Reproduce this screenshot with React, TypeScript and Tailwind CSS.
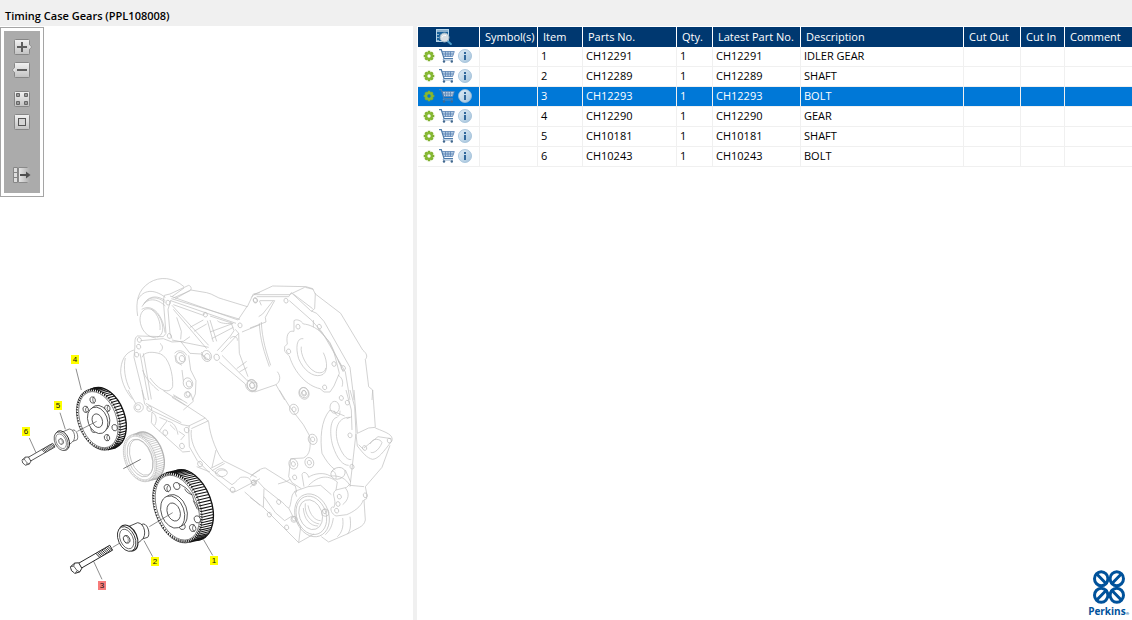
import { useState } from "react";
import type { ReactNode } from "react";

type Part = { item: string; part: string; qty: string; latest: string; description: string };

const PARTS: Part[] = [
  { item: "1", part: "CH12291", qty: "1", latest: "CH12291", description: "IDLER GEAR" },
  { item: "2", part: "CH12289", qty: "1", latest: "CH12289", description: "SHAFT" },
  { item: "3", part: "CH12293", qty: "1", latest: "CH12293", description: "BOLT" },
  { item: "4", part: "CH12290", qty: "1", latest: "CH12290", description: "GEAR" },
  { item: "5", part: "CH10181", qty: "1", latest: "CH10181", description: "SHAFT" },
  { item: "6", part: "CH10243", qty: "1", latest: "CH10243", description: "BOLT" },
];

const CALLOUTS = [
  { id: "4", x: 75, y: 359 },
  { id: "5", x: 58, y: 405 },
  { id: "6", x: 26, y: 431 },
  { id: "1", x: 214, y: 560 },
  { id: "2", x: 155, y: 561 },
  { id: "3", x: 102, y: 585 },
];

/* ---------- toolbar ---------- */

function ToolButton({ label, children }: { label: string; children: ReactNode }) {
  return (
    <button type="button" aria-label={label} title={label} className="block h-[18px] w-5">
      <svg viewBox="0 0 20 18" className="block h-[18px] w-5">
        {children}
      </svg>
    </button>
  );
}

function Tile() {
  return <rect x="2.5" y="1.5" width="15" height="15" rx="1" fill="url(#tile)" stroke="#868686" />;
}

function Toolbar() {
  return (
    <div className="w-11 border border-[#a5a5a5] bg-white p-[3px]">
      <div className="flex flex-col items-center bg-[#ababab] px-2 pt-[7px] pb-[9px]">
        <svg className="h-0 w-0" aria-hidden="true">
          <defs>
            <linearGradient id="tile" x1="0" y1="0" x2="0" y2="1">
              <stop offset="0" stopColor="#f2f2f2" />
              <stop offset="1" stopColor="#c2c2c2" />
            </linearGradient>
            <linearGradient id="fade" x1="0" y1="0" x2="1" y2="0">
              <stop offset="0" stopColor="#ececec" />
              <stop offset="1" stopColor="#ababab" />
            </linearGradient>
          </defs>
        </svg>
        <div className="flex flex-col gap-[5px]">
          <ToolButton label="Zoom in">
            <Tile />
            <path d="M17 6.500L19.500 9 17 11.500z" fill="#e6e6e6" />
            <path d="M17.500 6.500L19.700 9 17.500 11.500" fill="none" stroke="#8a8a8a" strokeWidth=".7" />
            <path d="M5 9h10M10 4v10" stroke="#5e5e5e" strokeWidth="2" />
          </ToolButton>
          <ToolButton label="Zoom out">
            <Tile />
            <path d="M3 6.500L.5 9 3 11.500z" fill="#e6e6e6" />
            <path d="M2.500 6.500L.3 9 2.500 11.500" fill="none" stroke="#8a8a8a" strokeWidth=".7" />
            <path d="M5 9h10" stroke="#5e5e5e" strokeWidth="2" />
          </ToolButton>
        </div>
        <div className="mt-[11px] flex flex-col gap-[5px]">
          <ToolButton label="Fit to window">
            <Tile />
            <path d="M4.500 3.500h3v3h-3zM12.500 3.500h3v3h-3zM4.500 11.500h3v3h-3zM12.500 11.500h3v3h-3z" fill="#9a9a9a" stroke="#666" />
          </ToolButton>
          <ToolButton label="Actual size">
            <Tile />
            <rect x="6.500" y="5.500" width="7" height="7" fill="#d4d4d4" stroke="#555" />
          </ToolButton>
        </div>
        <div className="mt-[35px]">
          <ToolButton label="Show list">
            <path d="M6 1.500h12v15H6z" fill="url(#fade)" />
            <path d="M1.500 1.500h4v15h-4z" fill="#dedede" stroke="#868686" />
            <path d="M1.500 6.500h4M1.500 11.500h4" stroke="#868686" />
            <path d="M6.500 1.500v15M6.500 1.500h9M6.500 16.500h9" fill="none" stroke="#8a8a8a" />
            <path d="M8 9h7" stroke="#505050" strokeWidth="2" />
            <path d="M14 5.500L18.500 9 14 12.500z" fill="#505050" />
          </ToolButton>
        </div>
      </div>
    </div>
  );
}

/* ---------- exploded view ---------- */

type GearProps = {
  cx: number; cy: number; rx: number; ry: number; dx: number; dy: number; teeth: number; color: string; weight: number;
};

const TILT = (-20 * Math.PI) / 180;

function GearRim({ cx, cy, rx, ry, dx, dy, teeth, color, weight }: GearProps) {
  const point = (a: number, k: number) => {
    const u = rx * k * Math.cos(a);
    const v = ry * k * Math.sin(a);
    return [cx + u * Math.cos(TILT) - v * Math.sin(TILT), cy + u * Math.sin(TILT) + v * Math.cos(TILT)];
  };
  let d = "";
  for (let i = 0; i < teeth; i++) {
    const a = (i / teeth) * Math.PI * 2;
    const [x, y] = point(a, 1);
    const [x1, y1] = point(a, 0.93);
    const nx = Math.cos(a) / rx;
    const ny = Math.sin(a) / ry;
    const wx = nx * Math.cos(TILT) - ny * Math.sin(TILT);
    const wy = nx * Math.sin(TILT) + ny * Math.cos(TILT);
    d += `M${x1.toFixed(1)} ${y1.toFixed(1)}L${x.toFixed(1)} ${y.toFixed(1)}`;
    if (wx * dx + wy * dy > 0) d += `l${dx} ${dy}`;
  }
  const spin = (x: number, y: number) => `rotate(-20 ${x} ${y})`;
  return (
    <g stroke={color} fill="#fff">
      <ellipse cx={cx + dx} cy={cy + dy} rx={rx} ry={ry} transform={spin(cx + dx, cy + dy)} strokeWidth="4" />
      <ellipse cx={cx} cy={cy} rx={rx} ry={ry} transform={spin(cx, cy)} strokeWidth="1.500" />
      <path d={d} strokeWidth={weight} fill="none" />
      <ellipse cx={cx} cy={cy} rx={rx * 0.89} ry={ry * 0.92} transform={spin(cx, cy)} strokeWidth="1.500" />
    </g>
  );
}

function Tilted({ x, y, rx, ry }: { x: number; y: number; rx: number; ry: number }) {
  return <ellipse cx={x} cy={y} rx={rx} ry={ry} transform={`rotate(-20 ${x} ${y})`} />;
}

function Bosses({ at, r }: { at: number[][]; r: number }) {
  return (
    <>
      {at.map(([x, y]) => (
        <Tilted key={`${x}-${y}`} x={x} y={y} rx={r} ry={r * 1.2} />
      ))}
    </>
  );
}

/* Each quadrant of the housing is drawn on its own grid, three units to the pixel. */
function Housing() {
  return (
    <g fill="none" stroke="#bfbfbf" strokeWidth="2.100" strokeLinejoin="round">
      <g transform="translate(110 270) scale(.33333)">
        <path d="M83 138C76 95 84 60 118 38C150 18 190 22 222 50" />
        <path d="M84 88C100 60 130 55 166 82M96 110C112 82 140 84 166 108M100 104C116 76 145 80 166 98M104 99C120 74 146 78 166 92" />
        <path d="M90 150C90 110 125 104 148 140C165 170 160 198 140 202M90 150C92 180 112 202 138 204" />
        <path d="M95 118C130 98 160 140 165 188M124 118C145 132 152 160 150 180" />
        <path d="M163 76L180 72L236 46C244 48 246 58 240 62L190 84M163 76L160 92L168 190L160 200L82 198C72 205 76 215 74 240L72 262L102 382L108 390" />
        <path d="M186 80L222 54M196 86L242 60L290 68C310 72 320 84 340 88L412 110L430 72L450 68" />
        <path d="M180 78L384 150L412 108M182 92L378 160M184 86L390 148M190 104L280 136L286 128M300 138L368 160" />
        <path d="M183 90L174 118L180 190L186 206M186 106L296 226M190 118L290 236M186 210L296 232M92 212L160 206L186 216L220 214L240 200" />
        <path d="M200 142L214 184L212 208M240 172L280 150M252 184L290 162M292 152L310 216M300 150L320 214M300 186L370 160M305 206L370 172" />
        <path d="M322 152C330 160 350 162 364 160L372 182L360 200L322 242M376 178L386 190L334 246M360 206C370 194 384 200 382 212" />
        <path d="M336 256L410 330L442 340M328 276L406 342C408 366 432 372 440 358M386 190L388 250L414 320M396 186L450 164M380 296L410 274M388 306L412 292" />
        <path d="M72 240C45 248 32 272 32 308C36 344 52 370 68 388M46 264C40 290 44 330 60 358" />
        <path d="M90 250L116 390M100 250L124 388M96 262C102 244 130 244 152 252C176 262 190 310 188 350C180 372 150 366 120 324" />
        <path d="M98 300C104 322 126 346 146 362M150 220C162 230 158 240 148 246M240 250L272 252L300 272M236 256L242 300L258 332L256 372L248 390M216 300L220 332M190 378L215 390M212 214L240 250" />
        <Bosses at={[[174, 98], [178, 198], [88, 210], [86, 230], [80, 254], [286, 134], [390, 166], [436, 90], [234, 372]]} r={6} />
        <Bosses at={[[212, 264], [290, 258], [234, 340], [426, 346]]} r={14} />
        <Bosses at={[[216, 266], [292, 260], [237, 342], [427, 347], [320, 262]]} r={8} />
        <path d="M194 250C202 238 222 240 230 256M195 256L198 276L216 286M274 246L286 270" />
      </g>
      <g transform="translate(250 270) scale(.33333)">
        <path d="M4 82L12 74L68 48L168 50L188 56L196 72L272 130L338 240C350 250 354 260 346 268L356 350L368 360L366 390" />
        <path d="M12 74L118 74L164 52M20 80L116 80L124 68L182 122L200 130L222 154L300 292L312 390M118 92L186 152L216 186L286 306L300 390" />
        <path d="M196 70L194 116L184 124M166 52L190 58M130 72L188 116M30 92L74 92L46 142L48 156L0 174M68 94L38 132L26 140M28 92L34 106" />
        <path d="M28 160C30 210 44 250 58 290M34 156C36 208 50 250 62 286M82 305C94 320 90 336 78 344L14 366M78 344L104 390" />
        <path d="M132 152C140 146 154 152 160 162C196 164 240 200 256 262L268 310L252 348L240 366L222 366L210 356C172 348 134 310 118 258L104 244V230L112 222C108 198 114 180 132 184Z" />
        <path d="M160 206C140 202 136 234 146 266C160 300 188 322 212 316C234 312 234 276 220 248M154 230C150 250 168 292 196 306C214 312 224 306 228 294M264 272L274 288M264 316C274 320 282 334 276 350" />
        <path d="M190 150L190 172M204 176L240 218L264 270L280 306" />
        <Bosses at={[[16, 92], [108, 92], [208, 170], [144, 170], [116, 244], [252, 282], [224, 352], [280, 294], [274, 384]]} r={6} />
        <Bosses at={[[162, 370], [6, 346]]} r={15} />
        <Bosses at={[[162, 370], [6, 346]]} r={7} />
      </g>
      <g transform="translate(110 390) scale(.33333)">
        <path d="M54 0L78 42M96 0L104 42L122 60L216 104L238 108L236 118L238 170L262 212L300 250L364 304H378L450 266" />
        <path d="M108 40L214 98M160 2L286 84L296 96C300 140 324 196 340 212L420 252L440 262M242 10L250 34L220 60M190 14L232 40M186 22L226 46" />
        <path d="M236 108L286 84M244 116L296 92M244 120C240 150 254 180 272 206L306 240L366 284C380 276 384 266 392 262C410 260 420 262 424 276M300 236L340 216M306 242L344 220M318 180L306 232M260 230L300 246" />
        <path d="M126 66L124 98L136 112L218 186L240 184M126 66C140 74 142 92 134 106M148 82L172 92L156 112L148 124M174 94C190 96 200 110 204 134M180 104L196 120M212 150L224 136L206 124M424 256L450 240M404 306L450 346" />
        <Bosses at={[[118, 56], [166, 128], [216, 168], [230, 120], [270, 222], [368, 300], [432, 278]]} r={7} />
        <circle cx="86" cy="52" r="14" />
        <circle cx="84" cy="52" r="8" />
        <ellipse cx="334" cy="248" rx="18" ry="12" />
        <path d="M320 252C322 240 340 236 350 244" />
        <circle cx="232" cy="14" r="9" />
      </g>
      <g transform="translate(250 390) scale(.33333)">
        <path d="M88 0L120 52L160 104L178 136C184 170 180 196 160 204L122 206L116 260L126 278L154 296" />
        <path d="M300 0L314 50L318 130L300 290M312 0L322 130L356 114L376 112L368 0M288 0L304 60L306 120M290 86L306 80" />
        <path d="M318 132L322 168C340 190 350 204 368 208C386 206 400 186 426 152C430 134 410 128 376 114M326 164L340 178M360 162C368 142 392 146 396 158C386 184 366 192 362 186M342 174L384 140L424 146" />
        <path d="M240 60C212 90 210 150 216 190C228 212 238 226 256 240M262 82C240 84 238 130 248 166C262 210 280 226 296 226M300 82C258 80 250 130 268 170C280 200 296 212 304 208M240 60L284 78M420 166L396 232L346 290L350 310V326L342 330L346 390C342 412 320 414 296 430L236 456L214 440" />
        <path d="M0 262C18 244 34 234 46 234L110 274L120 268M84 282L110 274L136 288L140 306C120 300 126 350 116 354C108 352 100 336 90 332L42 294L22 272L0 292M42 296L40 352L72 384L146 458L192 432M0 322L40 352M42 320L76 368L104 392L126 378" />
        <path d="M156 254C160 240 174 250 176 262C190 250 224 246 240 258C284 254 294 280 300 286L342 290M156 254L162 290M176 286C200 262 230 250 262 276L258 300C240 314 262 324 252 352C238 346 240 370 258 378L290 374C310 366 334 350 340 330" />
        <path d="M134 304L174 290L212 286L244 314M134 304L140 320M258 300L290 292L300 282M286 294C300 310 296 330 278 344M300 380C304 410 300 424 292 432M278 384C282 412 274 430 262 440M250 384C246 410 240 420 226 434M130 380L152 410L146 458M116 354L130 382" />
        <ellipse cx="186" cy="376" rx="50" ry="66" transform="rotate(-20 186 376)" />
        <ellipse cx="184" cy="376" rx="44" ry="59" transform="rotate(-20 184 376)" />
        <ellipse cx="182" cy="374" rx="34" ry="46" transform="rotate(-20 182 374)" />
        <path d="M166 340C162 372 182 398 208 402M160 354C162 388 180 408 204 408M174 346C180 376 196 392 212 392" />
        <ellipse cx="264" cy="250" rx="22" ry="17" transform="rotate(-20 264 250)" />
        <path d="M244 246C250 236 260 252 258 266M286 240L302 276M252 62C264 88 270 78 270 62" />
        <ellipse cx="254" cy="52" rx="14" ry="18" />
        <Bosses at={[[292, 38], [300, 136], [306, 230], [268, 320], [264, 342], [260, 362], [134, 262], [10, 278], [86, 336], [58, 374], [110, 412], [344, 174], [418, 152], [346, 316]]} r={6} />
        <Bosses at={[[132, 58], [188, 148], [130, 222], [178, 218], [162, 8]]} r={13} />
        <Bosses at={[[132, 58], [188, 148], [130, 222], [178, 218], [162, 8], [224, 364], [132, 386]]} r={6} />
        <circle cx="226" cy="368" r="11" />
        <circle cx="132" cy="388" r="9" />
      </g>
    </g>
  );
}

function Bolt({ x, y, scale }: { x: number; y: number; scale: number }) {
  return (
    <g transform={`translate(${x} ${y}) rotate(-30) scale(${scale})`} fill="#fff" stroke="#222" strokeWidth="2.500">
      <path d="M10 -8H116V8H10Z" />
      <path d="M70 -8l4 16M75 -8l4 16M80 -8l4 16M85 -8l4 16M90 -8l4 16M95 -8l4 16M100 -8l4 16M105 -8l4 16M110 -8l4 16" />
      <path d="M-12 -11L4 -14L14 -9V9L4 15L-10 12L-15 0Z" />
      <path d="M-12 -11L-3 -8L-1 8L-10 12M-3 -8L4 -14M-1 8L4 15" strokeWidth="1.800" />
    </g>
  );
}

function Bushing({ x, y, scale }: { x: number; y: number; scale: number }) {
  return (
    <g transform={`translate(${x} ${y}) scale(${scale})`} fill="#fff" stroke="#222" strokeWidth="2.400">
      <path d="M30 -40L50 -44C64 -42 70 -12 62 -4L42 2" />
      <path d="M4 -36L32 -48C54 -46 60 -8 44 4L18 26" />
      <ellipse cx="4" cy="-2" rx="26" ry="41" transform="rotate(-24 4 -2)" strokeWidth="3.500" />
      <ellipse cx="-1" cy="1" rx="25" ry="39" transform="rotate(-24 -1 1)" />
      <ellipse cx="-1" cy="1" rx="19" ry="31" transform="rotate(-24 -1 1)" strokeWidth="1.800" />
      <ellipse cx="-1" cy="2" rx="9" ry="12" transform="rotate(-24 -1 2)" />
      <path d="M-4 -8C4 -6 6 4 2 12" strokeWidth="1.500" />
    </g>
  );
}

function ExplodedView({ selected, onSelect }: { selected: string; onSelect: (id: string) => void }) {
  return (
    <svg viewBox="0 197 413 423" className="block w-full" role="img" aria-label="Timing case gears, exploded view">
      <Housing />

      <g transform="translate(110 390) scale(.33333)">
        <GearRim cx={90} cy={204} rx={46} ry={74} dx={23} dy={-7} teeth={64} color="#b4b4b4" weight={2} />
        <g fill="none" stroke="#b4b4b4" strokeWidth="2">
          <Tilted x={90} y={204} rx={35} ry={59} />
          <Tilted x={94} y={202} rx={32} ry={56} />
        </g>
        <path d="M40 236L92 208" stroke="#333" strokeWidth="2" />
      </g>

      <g transform="translate(0 350) scale(.33333)">
        <GearRim cx={295} cy={209} rx={61} ry={95} dx={18} dy={-5} teeth={66} color="#151515" weight={3.200} />
        <g fill="#fff" stroke="#333" strokeWidth="2.200">
          <Bosses at={[[278, 150], [322, 175], [344, 233], [321, 263], [281, 238], [257, 178]]} r={8} />
          <path d="M282 140C276 146 278 156 284 160M326 166C320 172 320 180 328 184M325 254C318 260 320 268 326 272M262 170C254 176 256 184 262 188" fill="none" />
          <Tilted x={299} y={205} rx={29} ry={40} />
          <Tilted x={293} y={211} rx={29} ry={41} />
          <Tilted x={292} y={212} rx={15} ry={21} />
        </g>
        <path d="M232 244L290 214M228 56L244 120M180 188L196 238M88 264L108 308M160 288L184 273" stroke="#555" strokeWidth="2" />
        <Bushing x={184} y={273} scale={0.75} />
        <Bolt x={79} y={333} scale={0.82} />
      </g>

      <g transform="translate(60 460) scale(.33333)">
        <GearRim cx={352} cy={143} rx={68} ry={110} dx={34} dy={-8} teeth={76} color="#151515" weight={3.200} />
        <g fill="#fff" stroke="#333" strokeWidth="2.200">
          <Bosses at={[[322, 84], [350, 78], [412, 178], [398, 204], [366, 198]]} r={9} />
          <path d="M356 70L378 84L396 104M394 102C402 112 398 124 410 132L418 152M400 122L412 148M326 76C318 82 320 92 326 96M402 194C396 202 396 210 404 214M374 86C378 98 390 102 396 104" fill="none" />
          <Tilted x={346} y={152} rx={34} ry={50} />
          <Tilted x={338} y={156} rx={34} ry={50} />
          <Tilted x={341} y={156} rx={19} ry={28} />
        </g>
        <path d="M268 200L338 158M430 238L458 286M252 242L278 290M100 302L126 358M158 262L198 238" stroke="#555" strokeWidth="2" />
        <Bushing x={201} y={236} scale={1} />
        <Bolt x={48} y={324} scale={1.050} />
      </g>

      {CALLOUTS.map((c) => (
        <g key={c.id} onClick={() => onSelect(c.id)} className="cursor-pointer">
          <rect x={c.x - 4} y={c.y - 4} width="8" height="9" fill={c.id === selected ? "#f77b7b" : "#ffff00"} />
          <text x={c.x} y={c.y + 3} textAnchor="middle" className="font-['Liberation_Sans',sans-serif] text-[8px]" fill="#111">
            {c.id}
          </text>
        </g>
      ))}
    </svg>
  );
}

/* ---------- table icons ---------- */

function CogIcon() {
  return (
    <svg viewBox="-6 -6 12 12" className="block h-3 w-3">
      <g stroke="#7fb02e" strokeWidth="2.600">
        <path d="M0 -5.300V5.300M-5.300 0H5.300M-3.700 -3.700L3.700 3.700M-3.700 3.700L3.700 -3.700" />
      </g>
      <circle r="2.900" fill="none" stroke="#86b832" strokeWidth="2.300" />
      <circle r="1.700" className="fill-white group-aria-selected:fill-[#0078d7]" />
    </svg>
  );
}

function CartIcon() {
  return (
    <svg viewBox="0 0 16 14" className="block h-[14px] w-4" fill="none">
      <path d="M3.500 2.500H15.300L13.600 7.500H4.900Z" fill="#b4cbe2" />
      <path d="M0 .7H2.300L5 9.500H14" stroke="#4d7cab" strokeWidth="1.200" />
      <path d="M3 2.500H15.300L13.600 7.500H4.600M3.800 5H14.400M6.500 2.500V7.500M9 2.500V7.500M11.500 2.500V7.500" stroke="#5a83b4" strokeWidth=".8" />
      <path d="M4.800 9.500L4 11H14" stroke="#6d94bd" strokeWidth=".8" />
      <circle cx="5" cy="12.500" r="1.200" fill="#41688f" />
      <circle cx="12.800" cy="12.500" r="1.200" fill="#41688f" />
    </svg>
  );
}

function InfoIcon() {
  return (
    <svg viewBox="0 0 14 14" className="block h-[14px] w-[14px]">
      <defs>
        <linearGradient id="info" x1="0" y1="0" x2="1" y2="1">
          <stop offset="0" stopColor="#e4eff7" />
          <stop offset="1" stopColor="#a3c3dc" />
        </linearGradient>
      </defs>
      <circle cx="7" cy="7" r="6.500" fill="url(#info)" stroke="#9bbbd5" strokeWidth=".8" />
      <path d="M6 3h2v2H6zM6 6h2v5H6z" fill="#31689c" />
    </svg>
  );
}

function PreviewIcon() {
  return (
    <svg viewBox="0 0 16 16" className="mx-auto block h-4 w-4" aria-label="Preview" role="img">
      <rect x=".5" y=".5" width="12" height="12" fill="#17609a" stroke="#b5d4e8" />
      <path d="M1 2H12" stroke="#fff" strokeWidth="1" />
      <path d="M2 5v1M2 8v1M2 11v1" stroke="#fff" />
      <path d="M11.500 12L15.500 15.700" stroke="#4d9cc9" strokeWidth="2" />
      <circle cx="8.500" cy="8.500" r="4.500" fill="#d7dee3" stroke="#9bb4c4" />
      <path d="M6.200 8.300C6.500 6.700 8.200 6 10 6.600" stroke="#fff" fill="none" />
    </svg>
  );
}

function PartsTable({ selected, onSelect }: { selected: string; onSelect: (id: string) => void }) {
  const head = "border-r border-white pl-[5px] text-left font-normal whitespace-nowrap last:border-r-0";
  const cell = "border-r border-b border-[#f0f0f0] pl-[3px] align-top whitespace-nowrap last:border-r-0";
  return (
    <table className="w-full table-fixed border-separate border-spacing-0 text-[11px] leading-[18px]">
      <colgroup>
        <col className="w-[62px]" />
        <col className="w-[58px]" />
        <col className="w-[45px]" />
        <col className="w-[94px]" />
        <col className="w-9" />
        <col className="w-[88px]" />
        <col className="w-[163px]" />
        <col className="w-[57px]" />
        <col className="w-11" />
        <col />
      </colgroup>
      <thead>
        <tr className="h-5 bg-[#003870] text-white">
          <th scope="col" className="border-r border-white p-0 pr-[10px]">
            <PreviewIcon />
          </th>
          {["Symbol(s)", "Item", "Parts No.", "Qty.", "Latest Part No.", "Description", "Cut Out", "Cut In", "Comment"].map((h) => (
            <th key={h} scope="col" className={head}>
              {h}
            </th>
          ))}
        </tr>
      </thead>
      <tbody>
        {PARTS.map((p) => (
          <tr
            key={p.item}
            aria-selected={p.item === selected}
            onClick={() => onSelect(p.item)}
            className="group h-5 cursor-default aria-selected:bg-[#0078d7] aria-selected:text-white"
          >
            <td className="border-r border-b border-[#f0f0f0] p-0 pl-[5px] align-top">
              <div className="flex h-[18px] items-center">
                <button type="button" aria-label={`Properties of item ${p.item}`}>
                  <CogIcon />
                </button>
                <button type="button" className="ml-1" aria-label={`Add item ${p.item} to cart`}>
                  <CartIcon />
                </button>
                <button type="button" className="ml-[3px]" aria-label={`Information on item ${p.item}`}>
                  <InfoIcon />
                </button>
              </div>
            </td>
            <td className={cell} />
            <td className={cell}>{p.item}</td>
            <td className={cell}>{p.part}</td>
            <td className={cell}>{p.qty}</td>
            <td className={cell}>{p.latest}</td>
            <td className={cell}>{p.description}</td>
            <td className={cell} />
            <td className={cell} />
            <td className={cell} />
          </tr>
        ))}
      </tbody>
    </table>
  );
}

function PerkinsLogo() {
  return (
    <div className="flex flex-col items-center text-[#00529b]">
      <svg viewBox="0 0 34 36" className="block h-9 w-[34px]" fill="none" stroke="currentColor" strokeWidth="3" aria-hidden="true">
        <ellipse cx="9.200" cy="9.700" rx="6.700" ry="7" />
        <ellipse cx="24.800" cy="9.700" rx="6.700" ry="7" />
        <ellipse cx="9.200" cy="26.300" rx="6.700" ry="7" />
        <ellipse cx="24.800" cy="26.300" rx="6.700" ry="7" />
        <path d="M4.500 4.700L15 15.500M29.500 4.700L19 15.500M4.500 31.300L15 20.500M29.500 31.300L19 20.500" />
      </svg>
      <p className="text-[10px] leading-3 font-bold">
        Perkins<span className="text-[4px]">®</span>
      </p>
    </div>
  );
}

export default function App() {
  const [selected, setSelected] = useState("3");
  return (
    <div className="flex min-h-screen flex-col bg-[#f0f0f0] font-['Open_Sans','Noto_Sans',sans-serif] text-black">
      <header className="flex h-[26px] items-end px-[5px] pb-[2px]">
        <h1 className="text-[11px] leading-4 font-semibold">Timing Case Gears (PPL108008)</h1>
      </header>
      <main className="flex flex-1 gap-1">
        <section className="w-[413px] shrink-0 bg-white pt-px" aria-label="Illustration">
          <Toolbar />
          <ExplodedView selected={selected} onSelect={setSelected} />
        </section>
        <section className="flex min-w-0 flex-1 flex-col justify-between bg-white pt-px pl-px" aria-label="Parts list">
          <PartsTable selected={selected} onSelect={setSelected} />
          <div className="flex justify-end pr-[3px]">
            <PerkinsLogo />
          </div>
        </section>
      </main>
    </div>
  );
}
